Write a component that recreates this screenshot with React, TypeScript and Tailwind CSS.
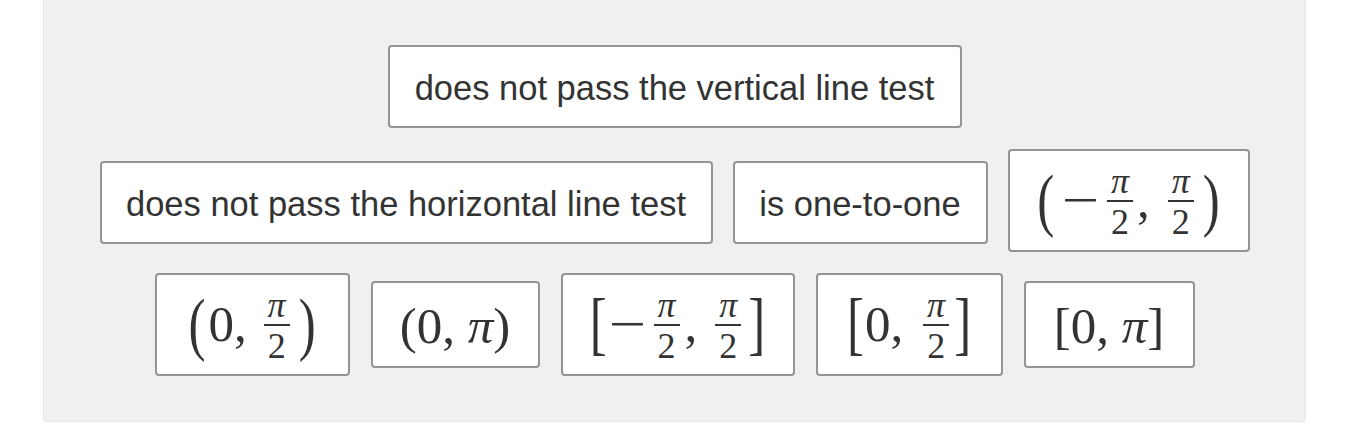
import React from 'react';

const serif = { fontFamily: '"Liberation Serif", "Times New Roman", serif' };

function Pi() {
  return <span className="italic">π</span>;
}

// inline fraction pi/2, bar sits on the row's centre line
function HalfPi() {
  return (
    <span className="inline-flex flex-col items-center text-[36px] leading-none">
      <span className="flex h-[41px] items-end pb-[1px]">
        <Pi />
      </span>
      <span className="h-[2px] w-[26px] bg-[#333]" />
      <span className="h-[41px] pt-[2px]">2</span>
    </span>
  );
}

function Big({ children }: { children: React.ReactNode }) {
  return <span className="inline-block scale-y-[1.36] text-[51px] leading-none">{children}</span>;
}

function Minus({ className }: { className: string }) {
  return (
    <span className={`inline-block origin-left scale-x-[1.3] text-[51px] leading-none ${className}`}>−</span>
  );
}

function Tile({
  w,
  h,
  math,
  extra = '',
  children,
}: {
  w: string;
  h: string;
  math?: boolean;
  extra?: string;
  children: React.ReactNode;
}) {
  return (
    <div
      className={`flex ${w} ${h} ${extra} shrink-0 items-center justify-center rounded-[4px] border-2 border-[#949494] bg-white text-[#333]`}
      style={math ? serif : undefined}
    >
      {children}
    </div>
  );
}

function Label({ children }: { children: React.ReactNode }) {
  return (
    <span
      className="pt-[3px] text-[34.5px] leading-none whitespace-nowrap"
      style={{ fontFamily: '"Liberation Sans", Arial, Helvetica, sans-serif' }}
    >
      {children}
    </span>
  );
}

export default function App() {
  return (
    <div className="min-h-[443px] bg-white">
      <div className="ml-[43px] flex w-[1263px] flex-col items-center gap-[21px] rounded-b-[4px] border-x border-b border-[#e6e6e6] bg-[#f0f0f0] pt-[45px] pb-[45px]">
        {/* row 1 */}
        <div className="flex items-center">
          <Tile w="w-[574px]" h="h-[83px]">
            <Label>does not pass the vertical line test</Label>
          </Tile>
        </div>

        {/* row 2 */}
        <div className="flex items-center gap-5">
          <Tile w="w-[613px]" h="h-[83px]" extra="mt-[4px]">
            <Label>does not pass the horizontal line test</Label>
          </Tile>
          <Tile w="w-[255px]" h="h-[83px]" extra="mt-[4px]">
            <Label>is one-to-one</Label>
          </Tile>
          <Tile w="w-[242px]" h="h-[103px]" math>
            <span className="flex items-center">
              <Big>(</Big>
              <Minus className="ml-[8px] mr-[16px]" />
              <HalfPi />
              <span className="mr-[18px] ml-[4px] text-[51px] leading-none">,</span>
              <HalfPi />
              <span className="ml-[9px]">
                <Big>)</Big>
              </span>
            </span>
          </Tile>
        </div>

        {/* row 3 */}
        <div className="flex items-center gap-[21px]">
          <Tile w="w-[195px]" h="h-[103px]" math>
            <span className="flex items-center">
              <Big>(</Big>
              <span className="ml-[3px] mr-[17px] text-[51px] leading-none">0,</span>
              <HalfPi />
              <span className="ml-[9px]">
                <Big>)</Big>
              </span>
            </span>
          </Tile>
          <Tile w="w-[169px]" h="h-[87px]" math>
            <span className="pt-[4px] text-[51px] leading-none whitespace-nowrap">
              (0, <Pi />)
            </span>
          </Tile>
          <Tile w="w-[234px]" h="h-[103px]" math>
            <span className="flex items-center">
              <Big>[</Big>
              <Minus className="ml-[2px] mr-[16px]" />
              <HalfPi />
              <span className="mr-[18px] ml-[5px] text-[51px] leading-none">,</span>
              <HalfPi />
              <span className="ml-[7px]">
                <Big>]</Big>
              </span>
            </span>
          </Tile>
          <Tile w="w-[187px]" h="h-[103px]" math>
            <span className="flex items-center">
              <Big>[</Big>
              <span className="ml-[1px] mr-[20px] text-[51px] leading-none">0,</span>
              <HalfPi />
              <span className="ml-[5px]">
                <Big>]</Big>
              </span>
            </span>
          </Tile>
          <Tile w="w-[171px]" h="h-[87px]" math>
            <span className="pt-[4px] text-[51px] leading-none whitespace-nowrap">
              [0, <Pi />]
            </span>
          </Tile>
        </div>
      </div>
    </div>
  );
}
